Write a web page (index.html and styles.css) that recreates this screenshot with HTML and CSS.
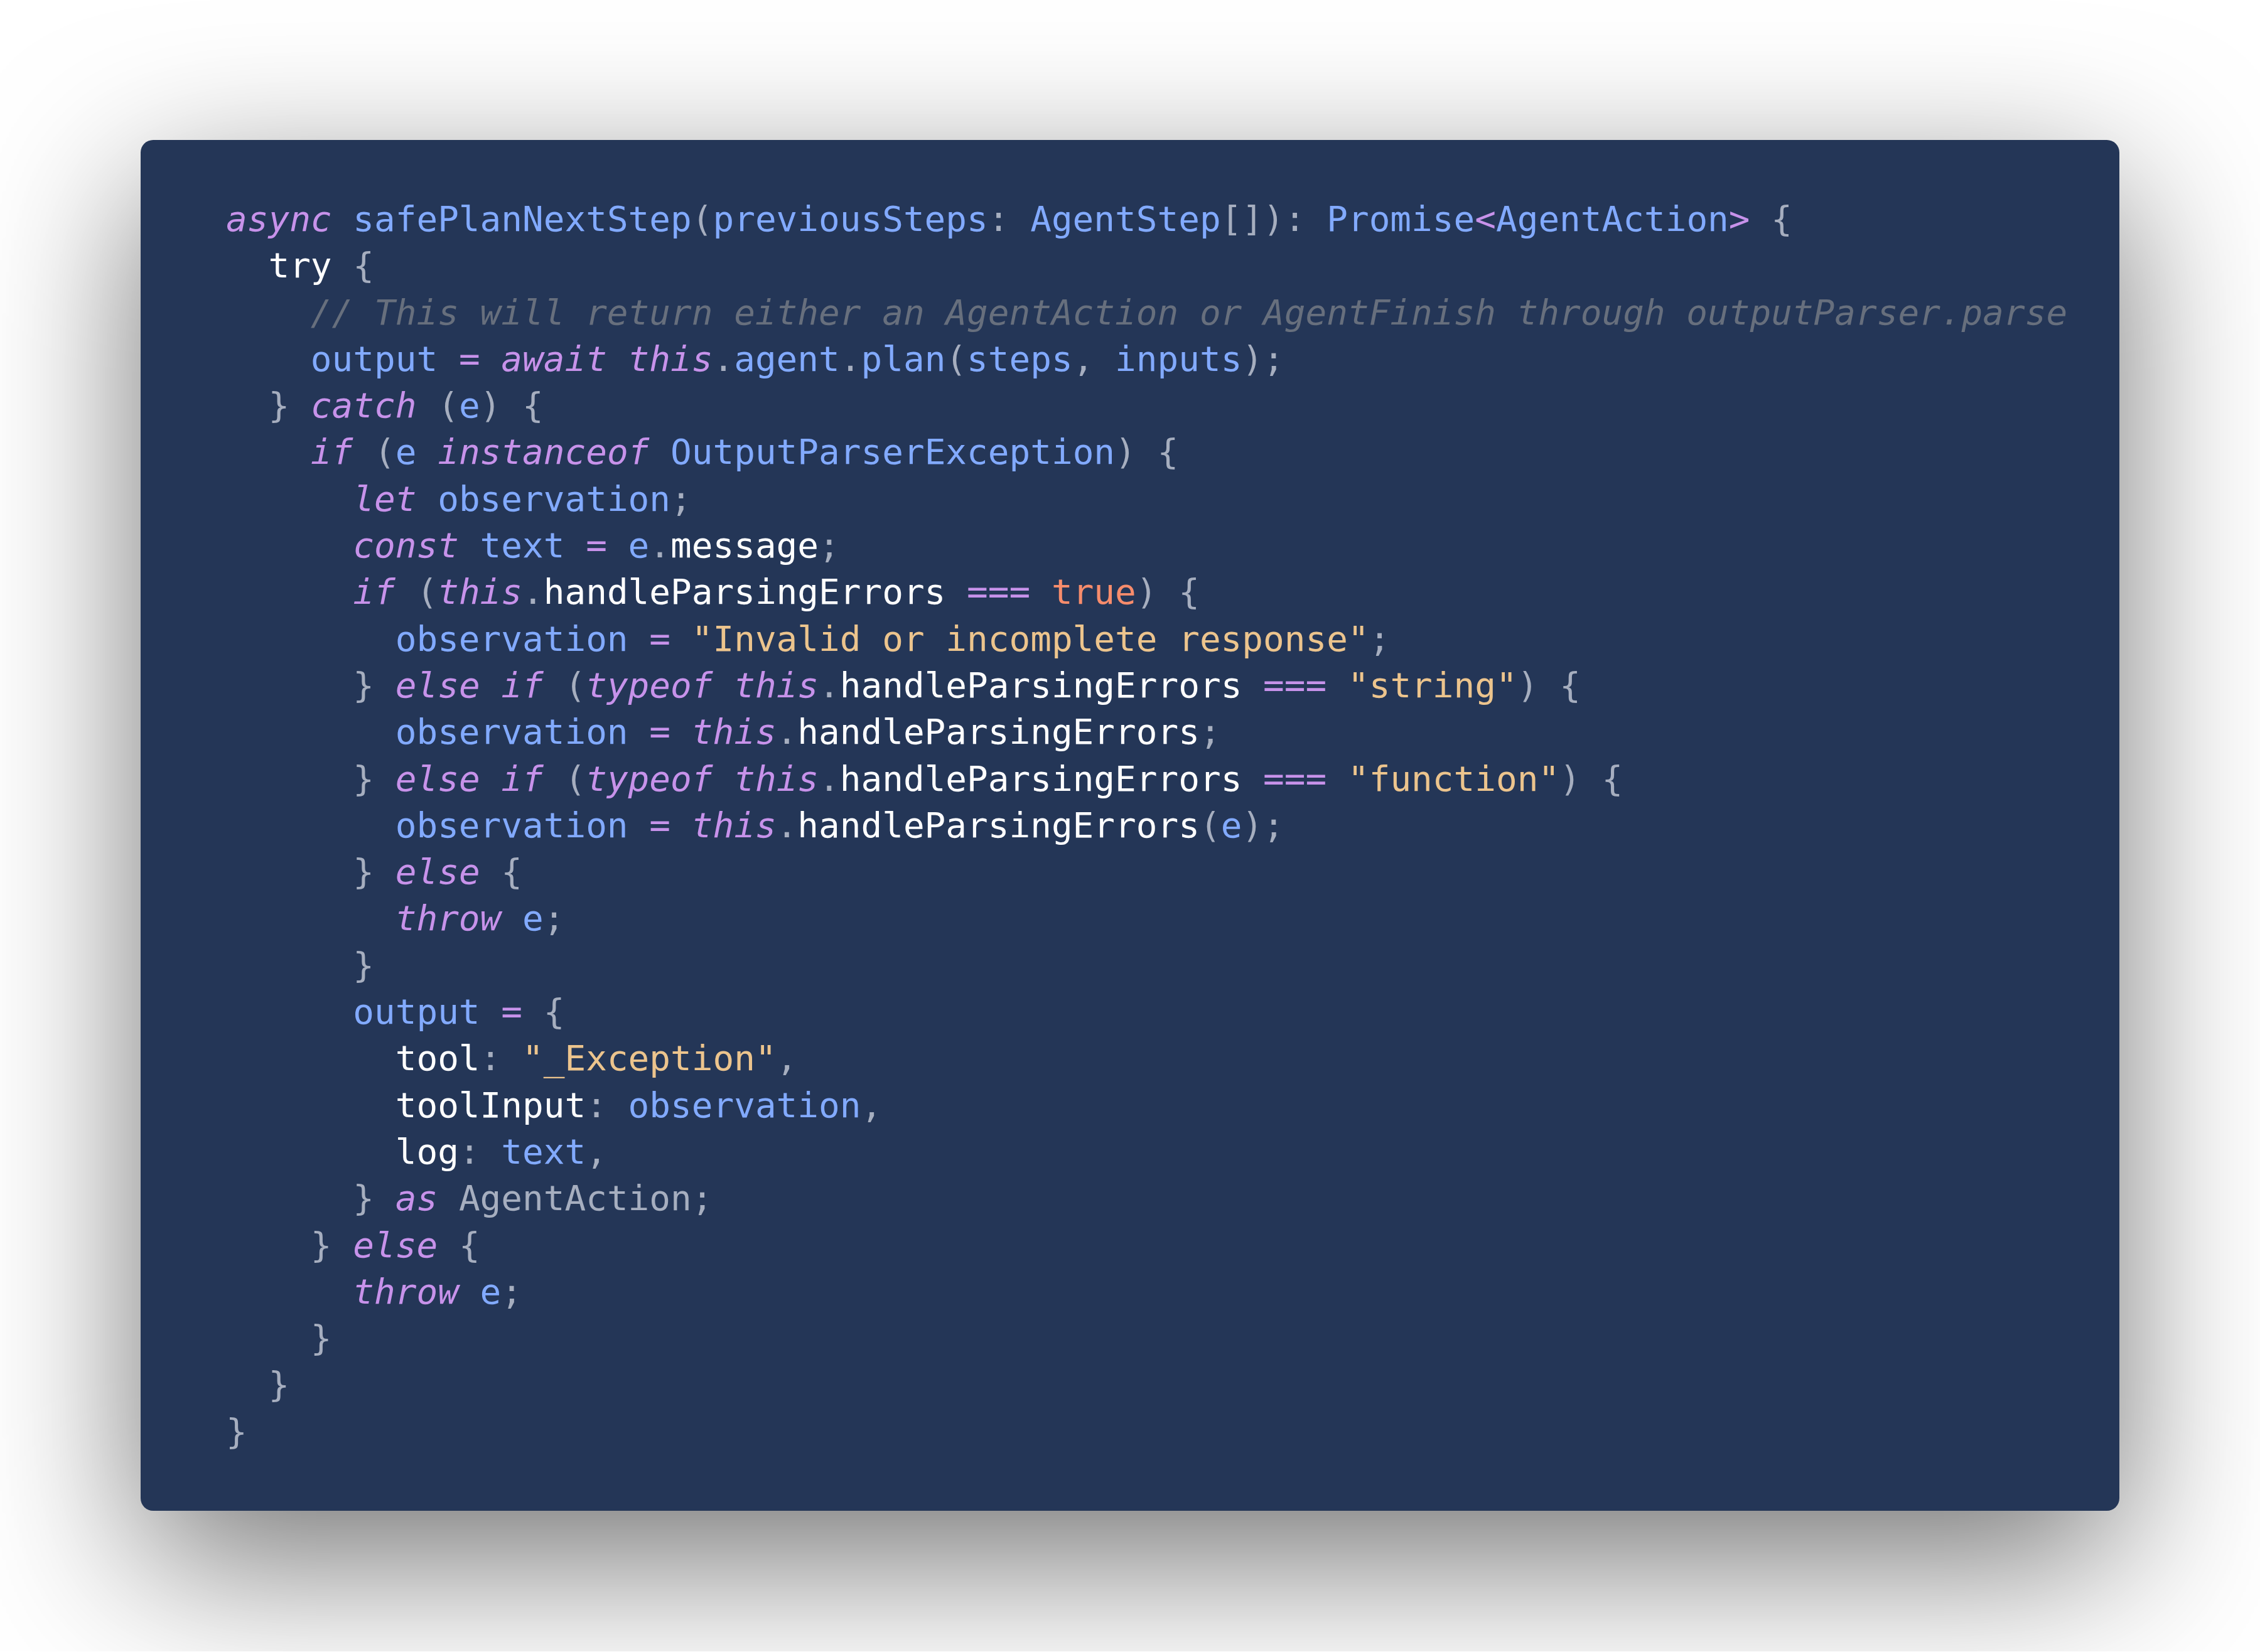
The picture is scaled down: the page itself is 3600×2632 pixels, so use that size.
FILE: index.html
```html
<!DOCTYPE html>
<html lang="en">
<head>
<meta charset="utf-8">
<title>safePlanNextStep</title>
<link rel="stylesheet" href="styles.css">
</head>
<body>
<main class="stage">
<section class="card">
<pre class="code"><code><span class="k">async</span> <span class="f">safePlanNextStep</span><span class="p">(</span><span class="f">previousSteps</span><span class="p">:</span> <span class="f">AgentStep</span><span class="p">[])</span><span class="p">:</span> <span class="f">Promise</span><span class="o">&lt;</span><span class="f">AgentAction</span><span class="o">&gt;</span> <span class="p">{</span>
  <span class="w">try</span> <span class="p">{</span>
    <span class="c">// This will return either an AgentAction or AgentFinish through outputParser.parse</span>
    <span class="f">output</span> <span class="o">=</span> <span class="k">await</span> <span class="k">this</span><span class="p">.</span><span class="f">agent</span><span class="p">.</span><span class="f">plan</span><span class="p">(</span><span class="f">steps</span><span class="p">,</span> <span class="f">inputs</span><span class="p">);</span>
  <span class="p">}</span> <span class="k">catch</span> <span class="p">(</span><span class="f">e</span><span class="p">)</span> <span class="p">{</span>
    <span class="k">if</span> <span class="p">(</span><span class="f">e</span> <span class="k">instanceof</span> <span class="f">OutputParserException</span><span class="p">)</span> <span class="p">{</span>
      <span class="k">let</span> <span class="f">observation</span><span class="p">;</span>
      <span class="k">const</span> <span class="f">text</span> <span class="o">=</span> <span class="f">e</span><span class="p">.</span><span class="w">message</span><span class="p">;</span>
      <span class="k">if</span> <span class="p">(</span><span class="k">this</span><span class="p">.</span><span class="w">handleParsingErrors</span> <span class="o">===</span> <span class="b">true</span><span class="p">)</span> <span class="p">{</span>
        <span class="f">observation</span> <span class="o">=</span> <span class="s">"Invalid or incomplete response"</span><span class="p">;</span>
      <span class="p">}</span> <span class="k">else</span> <span class="k">if</span> <span class="p">(</span><span class="k">typeof</span> <span class="k">this</span><span class="p">.</span><span class="w">handleParsingErrors</span> <span class="o">===</span> <span class="s">"string"</span><span class="p">)</span> <span class="p">{</span>
        <span class="f">observation</span> <span class="o">=</span> <span class="k">this</span><span class="p">.</span><span class="w">handleParsingErrors</span><span class="p">;</span>
      <span class="p">}</span> <span class="k">else</span> <span class="k">if</span> <span class="p">(</span><span class="k">typeof</span> <span class="k">this</span><span class="p">.</span><span class="w">handleParsingErrors</span> <span class="o">===</span> <span class="s">"function"</span><span class="p">)</span> <span class="p">{</span>
        <span class="f">observation</span> <span class="o">=</span> <span class="k">this</span><span class="p">.</span><span class="w">handleParsingErrors</span><span class="p">(</span><span class="f">e</span><span class="p">);</span>
      <span class="p">}</span> <span class="k">else</span> <span class="p">{</span>
        <span class="k">throw</span> <span class="f">e</span><span class="p">;</span>
      <span class="p">}</span>
      <span class="f">output</span> <span class="o">=</span> <span class="p">{</span>
        <span class="w">tool</span><span class="p">:</span> <span class="s">"_Exception"</span><span class="p">,</span>
        <span class="w">toolInput</span><span class="p">:</span> <span class="f">observation</span><span class="p">,</span>
        <span class="w">log</span><span class="p">:</span> <span class="f">text</span><span class="p">,</span>
      <span class="p">}</span> <span class="k">as</span> <span class="t">AgentAction</span><span class="p">;</span>
    <span class="p">}</span> <span class="k">else</span> <span class="p">{</span>
      <span class="k">throw</span> <span class="f">e</span><span class="p">;</span>
    <span class="p">}</span>
  <span class="p">}</span>
<span class="p">}</span></code></pre>
</section>
</main>
</body>
</html>
```

FILE: styles.css
```css
html, body {
  margin: 0;
  padding: 0;
  background: #ffffff;
}

.stage {
  padding: 223px 224px 224px 224px;
}

.card {
  background: #243657;
  border-radius: 20px;
  box-shadow: 0 80px 272px rgba(0, 0, 0, 0.55);
  padding: 89px 83px 89px 136px;
}

.code {
  margin: 0;
  font-family: "DejaVu Sans Mono", monospace;
  font-size: 56px;
  line-height: 74.3px;
  color: #bfc7d5;
  white-space: pre;
}

.code code {
  font: inherit;
}

.k {
  color: #c792ea;
  font-style: italic;
}

.o {
  color: #c792ea;
}

.f {
  color: #82aaff;
}

.p {
  color: #a6aebf;
}

.w {
  color: #ffffff;
}

.s {
  color: #ecc48d;
}

.b {
  color: #f78c6c;
}

.c {
  color: #676f7d;
  font-style: italic;
}

.t {
  color: #a6aebf;
}
```
